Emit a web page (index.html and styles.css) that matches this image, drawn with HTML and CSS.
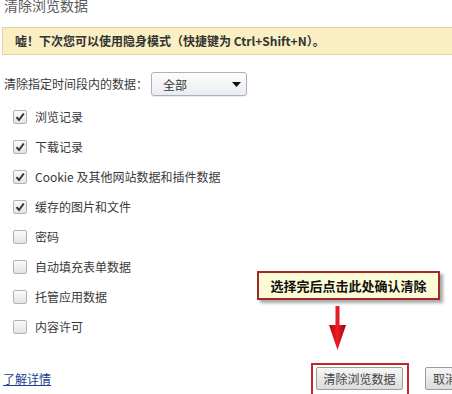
FILE: index.html
```html
<!DOCTYPE html>
<html lang="zh-CN">
<head>
<meta charset="utf-8">
<title>清除浏览数据</title>
<link rel="stylesheet" href="styles.css">
</head>
<body>
<div class="dialog">
  <h1 class="title">清除浏览数据</h1>
  <div class="banner">嘘！下次您可以使用隐身模式（快捷键为 Ctrl+Shift+N）。</div>
  <div class="range">
    <span class="range-label">清除指定时间段内的数据：</span>
    <div class="select">
      <span>全部</span>
      <svg class="caret" width="9" height="5" viewBox="0 0 9 5"><path d="M0 0H9L4.5 5Z" fill="#111"/></svg>
    </div>
  </div>
  <ul class="items">
    <li class="item"><span class="cb checked"><svg viewBox="0 0 12 12"><path d="M2.5 6.2L5 9L9.8 2.5" fill="none" stroke="#333" stroke-width="2"/></svg></span>浏览记录</li>
    <li class="item"><span class="cb checked"><svg viewBox="0 0 12 12"><path d="M2.5 6.2L5 9L9.8 2.5" fill="none" stroke="#333" stroke-width="2"/></svg></span>下载记录</li>
    <li class="item"><span class="cb checked"><svg viewBox="0 0 12 12"><path d="M2.5 6.2L5 9L9.8 2.5" fill="none" stroke="#333" stroke-width="2"/></svg></span>Cookie 及其他网站数据和插件数据</li>
    <li class="item"><span class="cb checked"><svg viewBox="0 0 12 12"><path d="M2.5 6.2L5 9L9.8 2.5" fill="none" stroke="#333" stroke-width="2"/></svg></span>缓存的图片和文件</li>
    <li class="item"><span class="cb"></span>密码</li>
    <li class="item"><span class="cb"></span>自动填充表单数据</li>
    <li class="item"><span class="cb"></span>托管应用数据</li>
    <li class="item"><span class="cb"></span>内容许可</li>
  </ul>
  <div class="footer">
    <a class="learn" href="#">了解详情</a>
    <div class="buttons">
      <div class="highlight"><button class="btn">清除浏览数据</button></div>
      <button class="btn cancel">取消</button>
    </div>
  </div>
  <div class="callout">选择完后点击此处确认清除</div>
  <svg class="arrow" width="22" height="46" viewBox="0 0 22 46">
    <defs>
      <linearGradient id="ag" x1="0" y1="0" x2="1" y2="0">
        <stop offset="0" stop-color="#b3060c"/>
        <stop offset="0.5" stop-color="#ee1c24"/>
        <stop offset="1" stop-color="#9c0409"/>
      </linearGradient>
    </defs>
    <path d="M8.5 0H12.5V19H19L10.5 44L2 19H8.5Z" fill="url(#ag)"/>
  </svg>
</div>
</body>
</html>
```
FILE: styles.css
```css
html, body {
  margin: 0;
  padding: 0;
  background: #fff;
  overflow: hidden;
}
body {
  width: 452px;
  height: 394px;
  font-family: "Noto Sans CJK SC", "Noto Sans", sans-serif;
  font-size: 12px;
  color: #3a3a3a;
}
.dialog {
  position: relative;
  height: 394px;
  padding-left: 4px;
  box-sizing: border-box;
}
.title {
  margin: -3px 0 0 0;
  font-size: 14px;
  line-height: 16px;
  font-weight: normal;
  color: #5a5a5a;
}
.banner {
  margin: 14px -20px 0 -2px;
  height: 26px;
  line-height: 26px;
  padding-left: 12px;
  background: #f9efc3;
  border: 1px solid #e2d49c;
  font-weight: bold;
  color: #333;
  white-space: nowrap;
}
.range {
  display: flex;
  align-items: center;
  margin-top: 17px;
  height: 24px;
}
.range-label {
  line-height: 16px;
  color: #3a3a3a;
}
.select {
  margin-left: 3px;
  width: 96px;
  height: 24px;
  box-sizing: border-box;
  border: 1px solid #a6b2c4;
  border-radius: 3px;
  background: linear-gradient(#fdfdfd, #ebecee);
  box-shadow: 0 1px 1px rgba(0,0,0,0.08);
  display: flex;
  align-items: center;
  justify-content: space-between;
  padding: 0 5px 0 11px;
  color: #333;
}
.items {
  list-style: none;
  margin: 6px 0 0 0;
  padding: 0 0 0 9px;
}
.item {
  height: 30px;
  display: flex;
  align-items: center;
  gap: 8px;
  line-height: 16px;
}
.cb {
  width: 12px;
  height: 12px;
  border: 1px solid #b2b2b2;
  border-radius: 2px;
  background: linear-gradient(#fafafa, #e4e4e4);
  display: flex;
}
.cb svg {
  width: 12px;
  height: 12px;
}
.footer {
  display: flex;
  align-items: flex-start;
  margin-top: 21px;
  margin-right: -33px;
}
.learn {
  margin-left: -1px;
  margin-top: 9px;
  color: #1d3f8f;
  text-decoration: underline;
  line-height: 14px;
}
.buttons {
  margin-left: auto;
  flex-shrink: 0;
  display: flex;
  align-items: flex-start;
  gap: 16px;
}
.highlight {
  border: 2px solid #c4262c;
  padding: 2px 4px 8px 3px;
}
.btn {
  display: block;
  font-family: "Noto Sans CJK SC", "Noto Sans", sans-serif;
  font-size: 12px;
  color: #444;
  width: 87px;
  height: 23px;
  padding: 0;
  border: 1px solid #9c9c9c;
  border-radius: 2px;
  background: linear-gradient(#f6f6f6, #dcdcdc);
  line-height: 20px;
}
.cancel {
  width: 60px;
  margin-top: 4px;
  text-align: left;
  padding-left: 7px;
}
.callout {
  position: absolute;
  left: 257px;
  top: 274px;
  width: 183px;
  height: 29px;
  box-sizing: border-box;
  border: 2px solid #9f2a2c;
  background: #fdfbd6;
  box-shadow: 3px 3px 3px rgba(0,0,0,0.35);
  font-size: 13px;
  font-weight: bold;
  color: #111;
  text-align: center;
  line-height: 25px;
}
.arrow {
  position: absolute;
  left: 327px;
  top: 309px;
}
```
